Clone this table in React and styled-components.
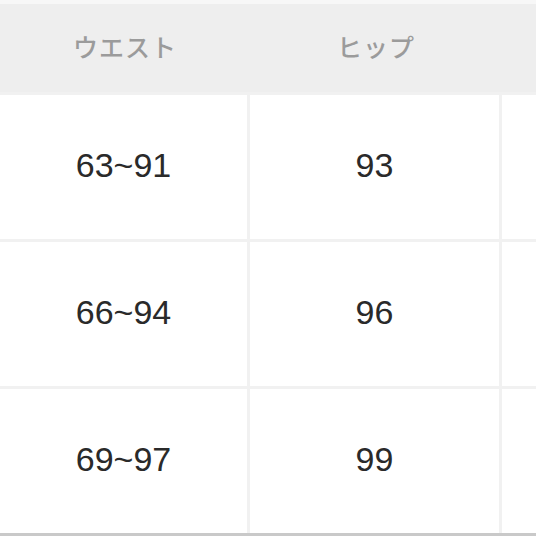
import React from 'react';
import styled, { createGlobalStyle } from 'styled-components';

const Global = createGlobalStyle`
  html, body {
    margin: 0;
    padding: 0;
    background: #ffffff;
    overflow: hidden;
  }
`;

const rows = [
  ['63~91', '93', ''],
  ['66~94', '96', ''],
  ['69~97', '99', ''],
];

const Table = styled.div`
  width: 536px;
  height: 536px;
  display: grid;
  grid-template-columns: 247px 249px 250px;
  grid-template-rows: 92px repeat(3, 144px);
  column-gap: 3px;
  row-gap: 3px;
  background: #f1f1f1;
  border-bottom: 3px solid #c9c9c9;
  box-sizing: border-box;
  overflow: hidden;
`;

const HeadCell = styled.div`
  background: #eeeeee;
  border-top: 4px solid #f7f7f7;
  display: flex;
  align-items: center;
  justify-content: center;
  font-family: "Noto Sans CJK JP", "Liberation Sans", sans-serif;
  font-size: 25px;
  font-weight: 500;
  color: #9b9b9b;
  letter-spacing: 1px;
  margin-right: ${({ $last }) => ($last ? '0' : '-3px')};
  box-sizing: border-box;
  padding-bottom: 4px;
`;

const Cell = styled.div`
  background: #ffffff;
  display: flex;
  align-items: center;
  justify-content: center;
  padding-bottom: 4px;
  font-family: "Liberation Sans", "Noto Sans", sans-serif;
  font-size: 34px;
  color: #2a2a2a;
`;

export default function App() {
  return (
    <>
      <Global />
      <Table>
        <HeadCell>ウエスト</HeadCell>
        <HeadCell>ヒップ</HeadCell>
        <HeadCell $last />
        {rows.map((r, i) =>
          r.map((v, j) => <Cell key={`${i}-${j}`}>{v}</Cell>)
        )}
      </Table>
    </>
  );
}
